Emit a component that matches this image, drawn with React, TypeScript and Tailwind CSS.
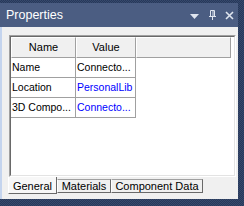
export default function App() {
  const rows = [
    { name: "Name", value: "Connecto...", blue: false },
    { name: "Location", value: "PersonalLib", blue: true },
    { name: "3D Compo...", value: "Connecto...", blue: true },
  ];

  return (
    <div className="w-[244px] h-[206px] bg-[repeating-conic-gradient(#27385a_0_25%,#36496c_0_50%)] bg-[length:2px_2px] pt-[3px] pr-[6px] pb-[7px] flex flex-col font-['Liberation_Sans',Arial,sans-serif] text-[10.5px] leading-none text-black">
      {/* Title bar */}
      <div className="h-[24px] bg-[#4b5d82] flex items-center pl-[6px] pr-[4px] text-white">
        <span className="text-[12.5px] flex-1">Properties</span>
        <svg width="9" height="5" viewBox="0 0 9 5" className="mr-[10px] mt-[2px]">
          <path d="M0 0 H9 L4.5 5 Z" fill="#dfe5ef" />
        </svg>
        <svg width="7" height="10" viewBox="0 0 7 10" className="mr-[9px]">
          <path d="M1.5 0.5 H5.5 V6.5 H1.5 Z M4 1 V6 M0 6.5 H7 M3.5 6.5 V10" stroke="#dfe5ef" strokeWidth="1" fill="none" />
        </svg>
        <svg width="9" height="9" viewBox="0 0 9 9">
          <path d="M1 1 L8 8 M8 1 L1 8" stroke="#dfe5ef" strokeWidth="1.6" />
        </svg>
      </div>

      {/* Body */}
      <div className="flex-1 flex">
        <div className="w-[2px] bg-[#c4d4ee]" />
        <div className="flex-1 bg-[#f0f0f0] flex flex-col pl-[7px] pr-[2px] pt-[8px]">
          {/* Grid, sunken frame */}
          <div className="h-[142px] border border-t-[#a0a0a0] border-l-[#a0a0a0] border-b-white border-r-white flex">
            <div className="flex-1 border border-t-[#696969] border-l-[#696969] border-b-[#e3e3e3] border-r-[#e3e3e3] bg-white">
              <div className="flex h-[21px] text-[11px]">
                <div className="w-[65px] bg-[#f0f0f0] border-t border-l border-white border-r border-b border-r-[#a0a0a0] border-b-[#a0a0a0] flex items-center justify-center">
                  Name
                </div>
                <div className="w-[60px] bg-[#f0f0f0] border-t border-l border-white border-r border-b border-r-[#a0a0a0] border-b-[#a0a0a0] flex items-center justify-center">
                  Value
                </div>
                <div className="w-[95px] bg-[#f0f0f0] border-t border-l border-white border-r border-b border-r-[#a0a0a0] border-b-[#a0a0a0]" />
              </div>
              {rows.map((r) => (
                <div key={r.name} className="flex h-[20px]">
                  <div className="w-[65px] border-r border-b border-[#a0a0a0] flex items-center pl-[1px] whitespace-nowrap overflow-hidden">
                    {r.name}
                  </div>
                  <div
                    className={
                      "w-[60px] border-r border-b border-[#a0a0a0] flex items-center pl-[1px] whitespace-nowrap overflow-hidden " +
                      (r.blue ? "text-[#0000ff]" : "text-black")
                    }
                  >
                    {r.value}
                  </div>
                </div>
              ))}
            </div>
          </div>

          {/* Tabs */}
          <div className="flex -ml-[1px] mt-[2px] text-[11px]">
            <div className="w-[49px] h-[17px] -mt-[2px] bg-[#f7f7f7] border-l border-white border-r border-b border-r-[#696969] border-b-[#696969] flex items-end justify-center pb-[1px]">
              General
            </div>
            <div className="w-[54px] h-[14px] border-l border-white border-r border-b border-r-[#696969] border-b-[#696969] border-t border-t-[#a0a0a0] flex items-center justify-center">
              Materials
            </div>
            <div className="w-[92px] h-[14px] border-l border-white border-r border-b border-r-[#696969] border-b-[#696969] border-t border-t-[#a0a0a0] flex items-center justify-center">
              Component Data
            </div>
          </div>
        </div>
      </div>
    </div>
  );
}
